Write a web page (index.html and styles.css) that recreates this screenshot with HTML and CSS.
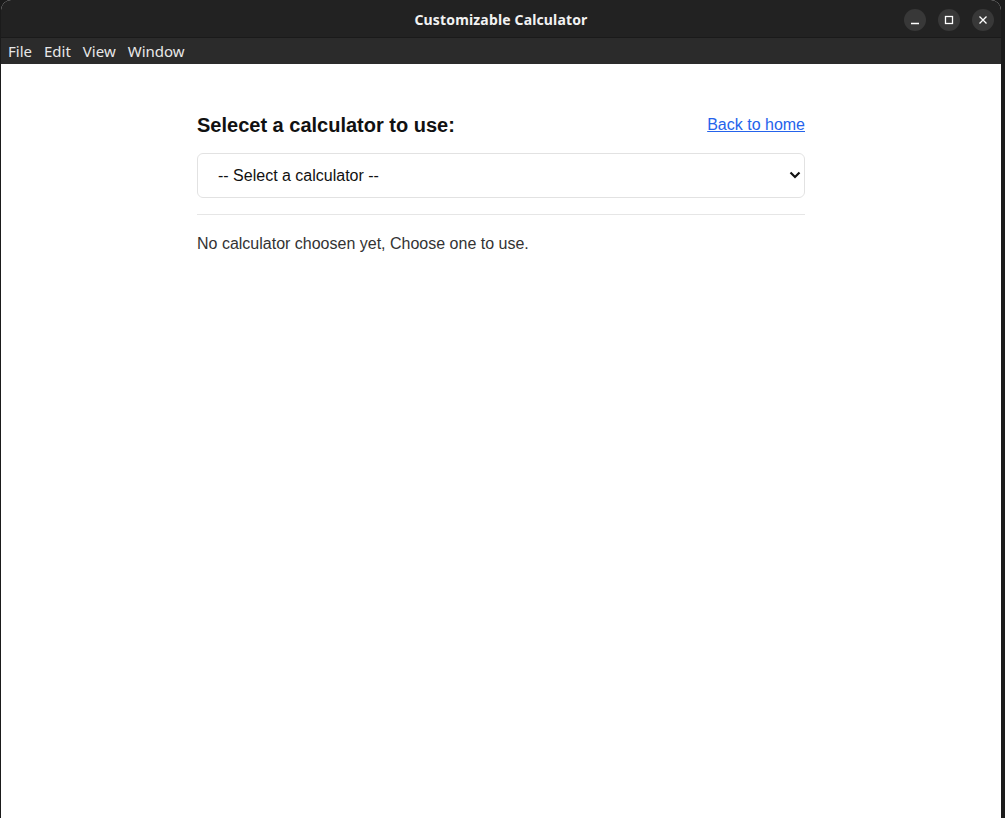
FILE: index.html
```html
<!DOCTYPE html>
<html lang="en">
<head>
<meta charset="utf-8">
<title>Customizable Calculator</title>
<link rel="stylesheet" href="styles.css">
</head>
<body>
<div class="window">
  <header class="titlebar">
    <div class="title">Customizable Calculator</div>
    <div class="controls">
      <span class="ctl"><svg width="10" height="10" viewBox="0 0 10 10"><path d="M1 8.5H9" stroke="#fff" stroke-width="1.3"/></svg></span>
      <span class="ctl"><svg width="10" height="10" viewBox="0 0 10 10"><rect x="1.5" y="1.5" width="7" height="7" fill="none" stroke="#fff" stroke-width="1.3"/></svg></span>
      <span class="ctl"><svg width="10" height="10" viewBox="0 0 10 10"><path d="M1.5 1.5L8.5 8.5M8.5 1.5L1.5 8.5" stroke="#fff" stroke-width="1.3"/></svg></span>
    </div>
  </header>
  <nav class="menubar">
    <span class="menu-item">File</span>
    <span class="menu-item">Edit</span>
    <span class="menu-item">View</span>
    <span class="menu-item">Window</span>
  </nav>
  <main class="content">
    <div class="panel">
      <div class="panel-head">
        <h2 class="heading">Selecet a calculator to use:</h2>
        <a class="home-link" href="#">Back to home</a>
      </div>
      <div class="select-wrap">
        <select class="calc-select">
          <option>-- Select a calculator --</option>
        </select>
        <svg class="chevron" width="12" height="8" viewBox="0 0 12 8"><path d="M1.5 1.5L6 6L10.5 1.5" fill="none" stroke="#111" stroke-width="2.2"/></svg>
      </div>
      <hr class="divider">
      <p class="empty">No calculator choosen yet, Choose one to use.</p>
    </div>
  </main>
</div>
</body>
</html>
```
FILE: styles.css
```css
html, body {
  margin: 0;
  padding: 0;
  height: 100%;
}
body {
  background: #1b1b1b;
  font-family: "Liberation Sans", Arial, sans-serif;
  overflow: hidden;
}
.window {
  margin-left: 1px;
  width: 1000px;
  height: 818px;
  display: flex;
  flex-direction: column;
  background: #fff;
  border-radius: 10px 10px 0 0;
  overflow: hidden;
}
.titlebar {
  height: 38px;
  flex: none;
  background: #222222;
  display: flex;
  align-items: center;
  justify-content: center;
  position: relative;
  border-bottom: 1px solid #1a1a1a;
  box-sizing: border-box;
  padding-top: 2px;
}
.title {
  color: #f2f2f2;
  font-family: "Noto Sans", sans-serif;
  font-weight: bold;
  font-size: 14px;
  letter-spacing: 0.15px;
}
.controls {
  position: absolute;
  right: 7px;
  top: 9px;
  display: flex;
  gap: 12px;
}
.ctl {
  width: 22px;
  height: 22px;
  border-radius: 50%;
  background: #383838;
  display: flex;
  align-items: center;
  justify-content: center;
}
.menubar {
  height: 26px;
  flex: none;
  background: #2b2b2b;
  display: flex;
  align-items: center;
  padding-left: 7px;
  gap: 12px;
  color: #e8e8e8;
  font-family: "Noto Sans", sans-serif;
  font-size: 15px;
}
.content {
  flex: 1;
  display: flex;
  justify-content: center;
  padding-top: 48px;
}
.panel {
  width: 608px;
}
.panel-head {
  display: flex;
  justify-content: space-between;
  align-items: center;
  height: 28px;
}
.heading {
  margin: 0;
  font-size: 20px;
  font-weight: bold;
  color: #111;
  position: relative;
  top: -1px;
}
.home-link {
  color: #2563eb;
  font-size: 16px;
  text-decoration: underline;
  position: relative;
  top: -1px;
}
.select-wrap {
  position: relative;
  margin-top: 13px;
}
.calc-select {
  width: 100%;
  height: 45px;
  -webkit-appearance: none;
  appearance: none;
  background: #fff;
  border: 1px solid #e2e2e2;
  border-radius: 6px;
  padding: 0 20px;
  font-family: "Liberation Sans", Arial, sans-serif;
  font-size: 16px;
  color: #111;
  display: block;
}
.chevron {
  position: absolute;
  right: 4px;
  top: 18px;
  pointer-events: none;
}
.divider {
  margin: 16px 0 0;
  border: 0;
  border-top: 1px solid #e6e6e6;
}
.empty {
  margin: 20px 0 0;
  font-size: 16px;
  color: #333;
}
```
